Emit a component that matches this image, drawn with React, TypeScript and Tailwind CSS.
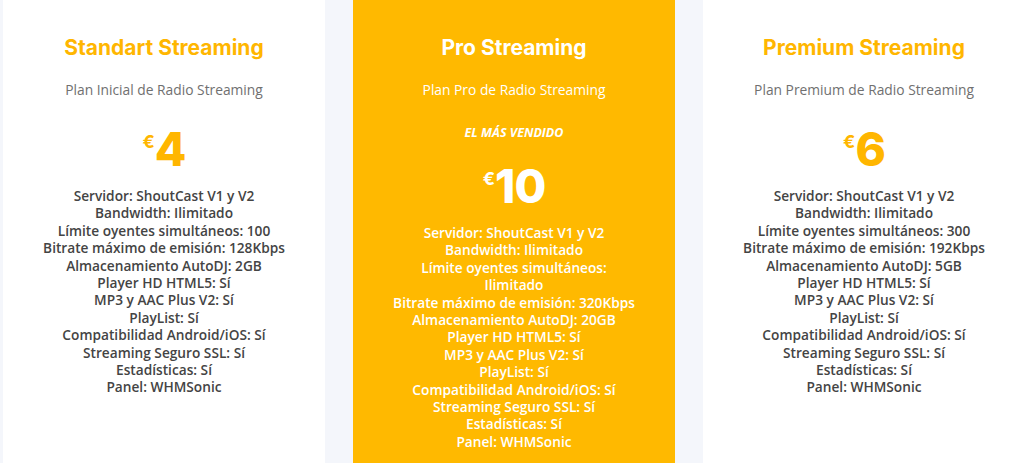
import React from "react"

type Plan = {
  title: string
  subtitle: string
  price: string
  featured?: boolean
  features: string[]
}

const common = [
  "Player HD HTML5: Sí",
  "MP3 y AAC Plus V2: Sí",
  "PlayList: Sí",
  "Compatibilidad Android/iOS: Sí",
  "Streaming Seguro SSL: Sí",
  "Estadísticas: Sí",
  "Panel: WHMSonic",
]

const plans: Plan[] = [
  {
    title: "Standart Streaming",
    subtitle: "Plan Inicial de Radio Streaming",
    price: "4",
    features: [
      "Servidor: ShoutCast V1 y V2",
      "Bandwidth: Ilimitado",
      "Límite oyentes simultáneos: 100",
      "Bitrate máximo de emisión: 128Kbps",
      "Almacenamiento AutoDJ: 2GB",
      ...common,
    ],
  },
  {
    title: "Pro Streaming",
    subtitle: "Plan Pro de Radio Streaming",
    price: "10",
    featured: true,
    features: [
      "Servidor: ShoutCast V1 y V2",
      "Bandwidth: Ilimitado",
      "Límite oyentes simultáneos:\nIlimitado",
      "Bitrate máximo de emisión: 320Kbps",
      "Almacenamiento AutoDJ: 20GB",
      ...common,
    ],
  },
  {
    title: "Premium Streaming",
    subtitle: "Plan Premium de Radio Streaming",
    price: "6",
    features: [
      "Servidor: ShoutCast V1 y V2",
      "Bandwidth: Ilimitado",
      "Límite oyentes simultáneos: 300",
      "Bitrate máximo de emisión: 192Kbps",
      "Almacenamiento AutoDJ: 5GB",
      ...common,
    ],
  },
]

function PlanCard({ plan }: { plan: Plan }) {
  const hot = plan.featured
  return (
    <div
      className={`w-[322px] shrink-0 flex flex-col items-center text-center pt-[34px] pb-10 ${
        hot ? "bg-[#ffb900] text-white" : "bg-white"
      }`}
    >
      <h3
        className={`font-['Inter',sans-serif] text-[21px] leading-[28px] font-bold ${
          hot ? "text-white" : "text-[#ffb600]"
        }`}
      >
        {plan.title}
      </h3>
      <p
        className={`mt-[18px] text-[13.8px] leading-[20px] ${hot ? "text-white" : "text-[#707070]"}`}
      >
        {plan.subtitle}
      </p>
      {hot && (
        <p className="mt-[25px] text-[12.5px] leading-[16px] font-bold italic uppercase text-white">
          El más vendido
        </p>
      )}
      <div
        className={`flex items-start font-['Inter',sans-serif] font-extrabold ${
          hot ? "mt-[29px] text-white" : "mt-[33px] text-[#ffb600]"
        }`}
      >
        <span className="text-[18px] leading-[18px] font-bold">€</span>
        <span className="text-[46px] leading-[34px] tracking-[-1px] mt-[-1px]">{plan.price}</span>
      </div>
      <ul
        className={`text-[13.7px] leading-[17.4px] font-semibold whitespace-pre-line ${
          hot ? "mt-[21px] text-white" : "mt-[21px] text-[#444444]"
        }`}
      >
        {plan.features.map((f) => (
          <li key={f}>{f}</li>
        ))}
      </ul>
    </div>
  )
}

export default function App() {
  return (
    <div className="h-[463px] overflow-hidden bg-[#f4f6fb] font-['Open_Sans',sans-serif]">
      <div className="flex gap-[28px] pl-[3px] h-full">
        {plans.map((p) => (
          <PlanCard key={p.title} plan={p} />
        ))}
      </div>
    </div>
  )
}
